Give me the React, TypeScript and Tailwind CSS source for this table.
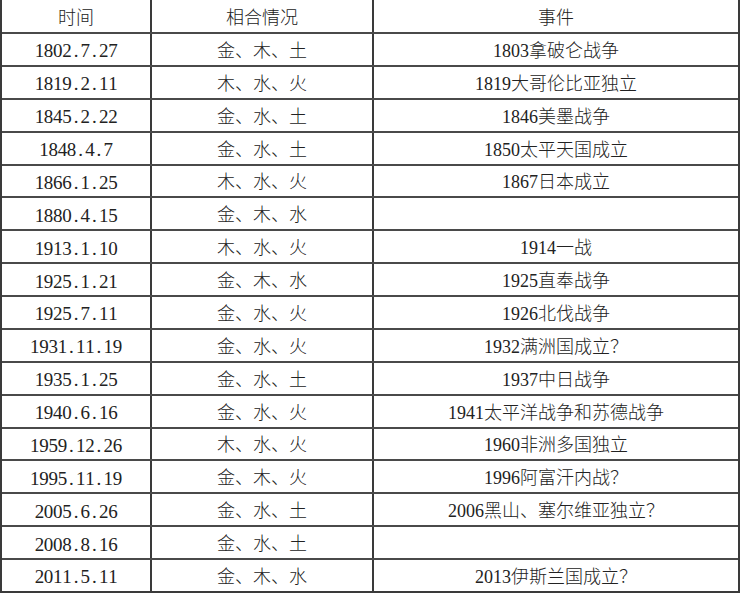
import React from "react";

const rows: [string, string, string][] = [
  ["1802.7.27", "金、木、土", "1803拿破仑战争"],
  ["1819.2.11", "木、水、火", "1819大哥伦比亚独立"],
  ["1845.2.22", "金、水、土", "1846美墨战争"],
  ["1848.4.7", "金、水、土", "1850太平天国成立"],
  ["1866.1.25", "木、水、火", "1867日本成立"],
  ["1880.4.15", "金、木、水", ""],
  ["1913.1.10", "木、水、火", "1914一战"],
  ["1925.1.21", "金、木、水", "1925直奉战争"],
  ["1925.7.11", "金、水、火", "1926北伐战争"],
  ["1931.11.19", "金、水、火", "1932满洲国成立？"],
  ["1935.1.25", "金、水、土", "1937中日战争"],
  ["1940.6.16", "金、水、火", "1941太平洋战争和苏德战争"],
  ["1959.12.26", "木、水、火", "1960非洲多国独立"],
  ["1995.11.19", "金、木、火", "1996阿富汗内战？"],
  ["2005.6.26", "金、水、土", "2006黑山、塞尔维亚独立？"],
  ["2008.8.16", "金、水、土", ""],
  ["2011.5.11", "金、木、水", "2013伊斯兰国成立？"],
];

function DateText({ s }: { s: string }) {
  return (
    <span className="inline-flex text-[19px]">
      {s.split("").map((c, i) => (
        <span key={i} className="inline-block w-[9.2px] text-center">
          {c}
        </span>
      ))}
    </span>
  );
}

export default function App() {
  return (
    <div
      className="w-[740px] h-[593px] bg-white text-[#222222] text-[18px] leading-none font-light"
      style={{ fontFamily: '"Liberation Serif", "Noto Sans CJK SC", serif' }}
    >
      <div className="flex flex-col h-[593px] border-l-2 border-r-2 border-b-2 border-[#3a3a3a]">
        <div className="flex h-[32px] shrink-0 pt-[3px]">
          <div className="w-[150px] shrink-0 border-r-2 border-[#3a3a3a] -mt-[3px] pt-[3px] flex items-center justify-center">时间</div>
          <div className="w-[222px] shrink-0 border-r-2 border-[#3a3a3a] -mt-[3px] pt-[3px] flex items-center justify-center">相合情况</div>
          <div className="flex-1 flex items-center justify-center">事件</div>
        </div>
        {rows.map((r, i) => (
          <div key={i} className="flex flex-1 border-t-2 border-[#4a4a4a]">
            <div className="w-[150px] shrink-0 border-r-2 border-[#3a3a3a] pt-[3px] flex items-center justify-center">
              <DateText s={r[0]} />
            </div>
            <div className="w-[222px] shrink-0 border-r-2 border-[#3a3a3a] pt-[3px] flex items-center justify-center">{r[1]}</div>
            <div className="flex-1 pt-[3px] flex items-center justify-center">{r[2]}</div>
          </div>
        ))}
      </div>
    </div>
  );
}
